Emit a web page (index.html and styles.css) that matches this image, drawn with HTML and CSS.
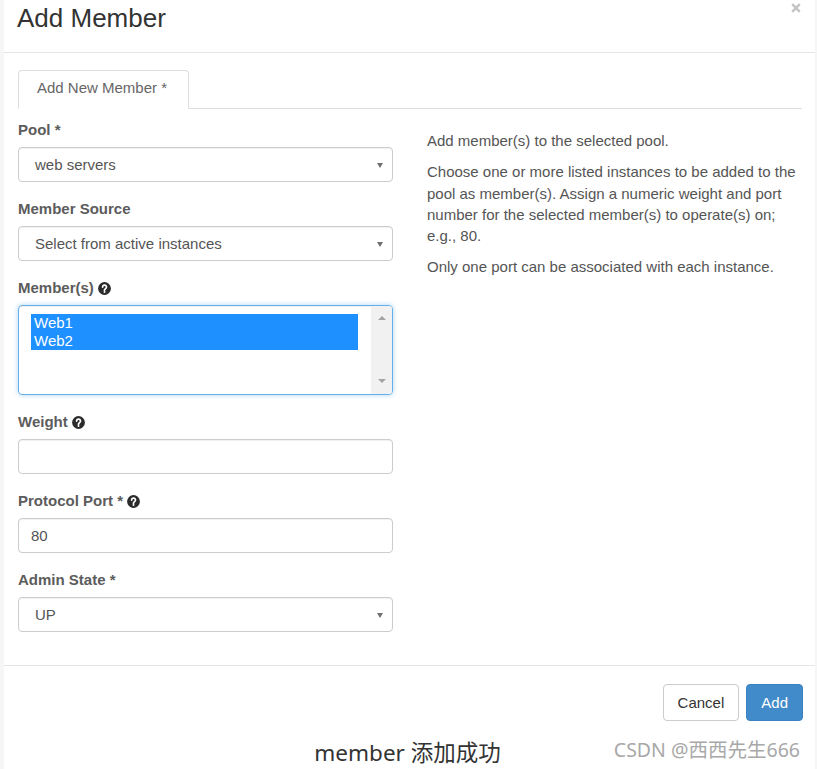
FILE: index.html
```html
<!DOCTYPE html>
<html>
<head>
<meta charset="utf-8">
<link rel="stylesheet" href="styles.css">
</head>
<body>
<div class="page">
  <div class="modal">
    <div class="modal-header">
      <h3 class="title">Add Member</h3>
      <svg class="close" viewBox="0 0 10 10" width="10" height="10" aria-label="Close"><path d="M1.2 1.2L8.8 8.8M8.8 1.2L1.2 8.8" stroke="#c4c4c4" stroke-width="2.4" stroke-linecap="butt"/></svg>
    </div>
    <div class="modal-body">
      <div class="nav">
        <div class="tab">Add New Member *</div>
      </div>
      <div class="grid">
        <div class="form">
          <div class="group">
            <div class="label">Pool *</div>
            <div class="select"><span>web servers</span><span class="caret"></span></div>
          </div>
          <div class="group">
            <div class="label">Member Source</div>
            <div class="select"><span>Select from active instances</span><span class="caret"></span></div>
          </div>
          <div class="group">
            <div class="label">Member(s) <svg class="help" viewBox="0 0 13 13" width="13" height="13"><circle cx="6.5" cy="6.5" r="6.4" fill="#2b2b2b"/><path d="M4.6 5.1a1.95 1.95 0 1 1 2.7 1.8c-.6.3-.8.6-.8 1.2v.4" fill="none" stroke="#fff" stroke-width="1.7" stroke-linecap="round"/><circle cx="6.5" cy="10.1" r="1" fill="#fff"/></svg></div>
            <div class="multi">
              <div class="options">
                <div class="option">Web1</div>
                <div class="option">Web2</div>
              </div>
              <div class="scrollbar">
                <span class="arrow-up"></span>
                <span class="arrow-down"></span>
              </div>
            </div>
          </div>
          <div class="group">
            <div class="label">Weight <svg class="help" viewBox="0 0 13 13" width="13" height="13"><circle cx="6.5" cy="6.5" r="6.4" fill="#2b2b2b"/><path d="M4.6 5.1a1.95 1.95 0 1 1 2.7 1.8c-.6.3-.8.6-.8 1.2v.4" fill="none" stroke="#fff" stroke-width="1.7" stroke-linecap="round"/><circle cx="6.5" cy="10.1" r="1" fill="#fff"/></svg></div>
            <div class="input"></div>
          </div>
          <div class="group">
            <div class="label">Protocol Port * <svg class="help" viewBox="0 0 13 13" width="13" height="13"><circle cx="6.5" cy="6.5" r="6.4" fill="#2b2b2b"/><path d="M4.6 5.1a1.95 1.95 0 1 1 2.7 1.8c-.6.3-.8.6-.8 1.2v.4" fill="none" stroke="#fff" stroke-width="1.7" stroke-linecap="round"/><circle cx="6.5" cy="10.1" r="1" fill="#fff"/></svg></div>
            <div class="input">80</div>
          </div>
          <div class="group">
            <div class="label">Admin State *</div>
            <div class="select"><span>UP</span><span class="caret"></span></div>
          </div>
        </div>
        <div class="help-text">
          <p>Add member(s) to the selected pool.</p>
          <p>Choose one or more listed instances to be added to the pool as member(s). Assign a numeric weight and port number for the selected member(s) to operate(s) on; e.g., 80.</p>
          <p>Only one port can be associated with each instance.</p>
        </div>
      </div>
    </div>
    <div class="modal-footer">
      <div class="btn btn-default">Cancel</div>
      <div class="btn btn-primary">Add</div>
    </div>
    <div class="caption">member 添加成功</div>
    <div class="watermark">CSDN @西西先生666</div>
  </div>
</div>
</body>
</html>
```

FILE: styles.css
```css
html, body {
  margin: 0;
  padding: 0;
}
body {
  background: #f6f6f6;
  font-family: "Liberation Sans", Arial, sans-serif;
  font-size: 15px;
  color: #555;
}
.page {
  width: 817px;
  height: 769px;
  overflow: hidden;
}
.modal {
  position: relative;
  margin-left: 4px;
  width: 811px;
  height: 769px;
  background: #fff;
}
.modal-header {
  display: flex;
  justify-content: space-between;
  align-items: flex-start;
  box-sizing: border-box;
  height: 53px;
  border-bottom: 1px solid #e5e5e5;
  padding: 0 13px 0 13px;
}
.title {
  margin: 0;
  padding-top: 5px;
  font-size: 26px;
  line-height: 26px;
  font-weight: normal;
  color: #333;
}
.close {
  display: block;
  margin-top: 3px;
  margin-right: 1px;
}
.modal-body {
  padding: 17px 13px 16px 14px;
}
.nav {
  display: flex;
  border-bottom: 1px solid #ddd;
}
.tab {
  border: 1px solid #ddd;
  border-bottom-color: transparent;
  border-radius: 4px 4px 0 0;
  background: #fff;
  margin-bottom: -1px;
  padding: 7px 21px 10px 18px;
  line-height: 20px;
  color: #666;
}
.grid {
  display: grid;
  grid-template-columns: 375px 1fr;
  column-gap: 34px;
  margin-top: 11px;
}
.group {
  margin-bottom: 17px;
}
.label {
  display: flex;
  align-items: center;
  gap: 4px;
  font-weight: bold;
  line-height: 20px;
  margin-bottom: 7px;
  color: #5c5c5c;
}
.help {
  display: block;
}
.select {
  display: flex;
  justify-content: space-between;
  align-items: center;
  height: 35px;
  box-sizing: border-box;
  border: 1px solid #ccc;
  border-radius: 4px;
  padding: 0 9px 0 16px;
  color: #555;
  box-shadow: inset 0 1px 1px rgba(0,0,0,.06);
}
.caret {
  width: 0;
  height: 0;
  border-left: 3px solid transparent;
  border-right: 3px solid transparent;
  border-top: 5px solid #707070;
  margin-top: 1px;
}
.input {
  display: flex;
  align-items: center;
  height: 35px;
  box-sizing: border-box;
  border: 1px solid #ccc;
  border-radius: 4px;
  padding: 0 12px;
  color: #555;
  box-shadow: inset 0 1px 1px rgba(0,0,0,.06);
}
.multi {
  display: flex;
  height: 90px;
  box-sizing: border-box;
  border: 1px solid #66afe9;
  border-radius: 4px;
  box-shadow: inset 0 1px 1px rgba(0,0,0,.075), 0 0 5px rgba(102,175,233,.55);
  overflow: hidden;
}
.options {
  flex: 1;
  padding: 8px 13px 0 12px;
}
.option {
  background: #1e90ff;
  color: #fff;
  font-size: 15px;
  line-height: 18px;
  padding-left: 3px;
}
.scrollbar {
  width: 21px;
  background: #f1f1f1;
  display: flex;
  flex-direction: column;
  align-items: center;
  justify-content: space-between;
  padding: 10px 0 11px;
}
.arrow-up {
  width: 0;
  height: 0;
  border-left: 4px solid transparent;
  border-right: 4px solid transparent;
  border-bottom: 4px solid #a3a3a3;
}
.arrow-down {
  width: 0;
  height: 0;
  border-left: 4px solid transparent;
  border-right: 4px solid transparent;
  border-top: 4px solid #a3a3a3;
}
.help-text {
  margin-top: 10px;
  color: #555;
  line-height: 21.3px;
}
.help-text p {
  margin: 0 0 10px 0;
}
.modal-footer {
  display: flex;
  justify-content: flex-end;
  gap: 7px;
  border-top: 1px solid #e5e5e5;
  padding: 18px 12px 17px;
}
.btn {
  height: 37px;
  box-sizing: border-box;
  display: flex;
  align-items: center;
  padding: 0 14px;
  border: 1px solid #ccc;
  border-radius: 4px;
  line-height: 20px;
}
.btn-default {
  background: #fff;
  color: #333;
}
.btn-primary {
  background: #428bca;
  border-color: #3a82c2;
  color: #fff;
}
.caption {
  text-align: center;
  margin-left: -4px;
  font-family: "Noto Sans", "Noto Sans CJK SC", sans-serif;
  font-size: 22.5px;
  line-height: 30px;
  color: #333;
}
.watermark {
  position: absolute;
  right: 15px;
  top: 737px;
  font-family: "Noto Sans", "Noto Sans CJK SC", sans-serif;
  font-size: 19.5px;
  line-height: 26px;
  color: #a8a8a8;
}
```
